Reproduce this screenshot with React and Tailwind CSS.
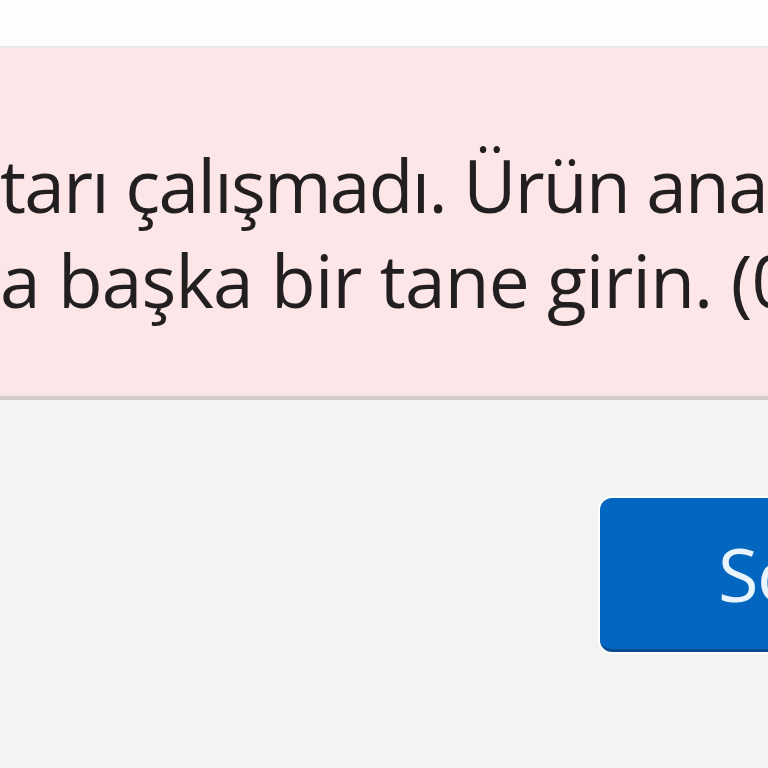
export default function App() {
  return (
    <div
      className="h-[768px] w-[768px] overflow-hidden flex flex-col bg-[#f3f3f3]"
      style={{ fontFamily: '"Open Sans", "Noto Sans", sans-serif' }}
    >
      {/* window top strip */}
      <div className="h-[46px] shrink-0 bg-[#fdfdfd]" />
      <div className="h-[2px] shrink-0 bg-[#ece6e6]" />

      {/* error info bar */}
      <div className="h-[345px] shrink-0 bg-[#fde6e8] pt-[89px] overflow-hidden">
        <div className="text-[73px] leading-[95px] text-[#231f20] whitespace-nowrap">
          <div className="tracking-[-1.7px]">tarı çalışmadı. Ürün anahtarını</div>
          <div className="tracking-[-0.8px]">a başka bir tane girin. (0xC004F050)</div>
        </div>
      </div>
      <div className="h-[3px] shrink-0 bg-[#f6e4e5]" />
      <div className="h-[4px] shrink-0 bg-[#d2cbcc]" />

      {/* footer with primary action */}
      <div className="flex-1 flex justify-end pt-[96px]">
        <div className="w-[170px] h-[158px] shrink-0 rounded-l-[14px] border-2 border-r-0 border-white">
          <button
            type="button"
            className="w-full h-full rounded-l-[12px] bg-[#0066c0] border-b-[3px] border-[#0a4a8f] text-[#e8f4ff] text-[74px] leading-none tracking-[-1.7px] text-left pl-[118px] whitespace-nowrap overflow-hidden"
          >
            Sonraki
          </button>
        </div>
      </div>
    </div>
  )
}
